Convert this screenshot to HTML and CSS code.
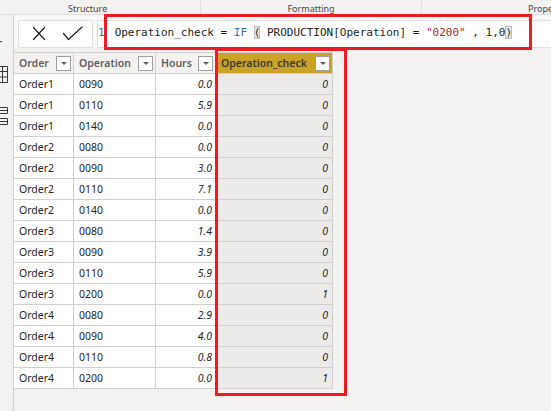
FILE: index.html
```html
<!DOCTYPE html>
<html>
<head>
<meta charset="utf-8">
<link rel="stylesheet" href="styles.css">
</head>
<body>
<div class="app">
  <div class="ribbon">
    <div class="rsec rsec-structure">Structure</div>
    <div class="rsec rsec-format">Formatting</div>
    <div class="rsec rsec-props">Properties</div>
  </div>
  <div class="main">
    <div class="sidebar">
      <svg class="navicons" width="13" height="120" viewBox="0 0 13 120">
        <rect x="0" y="26" width="2" height="1.2" fill="#605e5c"/>
        <g fill="none" stroke="#3b3a39" stroke-width="1">
          <path d="M0 51.5H7.5V67.5H0M0 56.5H7.5M0 62H7.5M2.5 51.5V67.5"/>
          <path d="M0 92.5H7.5V98.5H0M0 95.5H7.5"/>
          <path d="M0 103.5H7.5V109.5H0M0 106.5H7.5"/>
        </g>
      </svg>
    </div>
    <div class="content">
      <div class="fbar">
        <div class="xbox">
          <svg width="73" height="26" viewBox="0 0 73 26">
            <g fill="none" stroke="#201f1e" stroke-width="1.2" stroke-linecap="round" stroke-linejoin="round">
              <path d="M14.5 6.5L25.5 18.5M25.5 6.5L14.5 18.5"/>
              <path d="M44.5 12.5L49.5 18.5L63 6"/>
            </g>
          </svg>
        </div>
        <div class="finput">
          <span class="ln">1</span><span class="code">Operation_check = <span class="kw">IF</span> <span class="bm">(</span> PRODUCTION[Operation] = <span class="str">"0200"</span> , 1,0<span class="bm">)</span></span>
        </div>
      </div>
      <div class="grid">
        <div class="c h"><span>Order</span><span class="dd"></span></div>
        <div class="c h"><span>Operation</span><span class="dd"></span></div>
        <div class="c h"><span>Hours</span><span class="dd"></span></div>
        <div class="c h sel"><span>Operation_check</span><span class="dd"></span></div>

        <div class="c">Order1</div><div class="c">0090</div><div class="c num">0.0</div><div class="c num chk">0</div>
        <div class="c">Order1</div><div class="c">0110</div><div class="c num">5.9</div><div class="c num chk">0</div>
        <div class="c">Order1</div><div class="c">0140</div><div class="c num">0.0</div><div class="c num chk">0</div>
        <div class="c">Order2</div><div class="c">0080</div><div class="c num">0.0</div><div class="c num chk">0</div>
        <div class="c">Order2</div><div class="c">0090</div><div class="c num">3.0</div><div class="c num chk">0</div>
        <div class="c">Order2</div><div class="c">0110</div><div class="c num">7.1</div><div class="c num chk">0</div>
        <div class="c">Order2</div><div class="c">0140</div><div class="c num">0.0</div><div class="c num chk">0</div>
        <div class="c">Order3</div><div class="c">0080</div><div class="c num">1.4</div><div class="c num chk">0</div>
        <div class="c">Order3</div><div class="c">0090</div><div class="c num">3.9</div><div class="c num chk">0</div>
        <div class="c">Order3</div><div class="c">0110</div><div class="c num">5.9</div><div class="c num chk">0</div>
        <div class="c">Order3</div><div class="c">0200</div><div class="c num">0.0</div><div class="c num chk">1</div>
        <div class="c">Order4</div><div class="c">0080</div><div class="c num">2.9</div><div class="c num chk">0</div>
        <div class="c">Order4</div><div class="c">0090</div><div class="c num">4.0</div><div class="c num chk">0</div>
        <div class="c">Order4</div><div class="c">0110</div><div class="c num">0.8</div><div class="c num chk">0</div>
        <div class="c">Order4</div><div class="c">0200</div><div class="c num">0.0</div><div class="c num chk">1</div>
      </div>
    </div>
  </div>
  <div class="hl hl-formula"></div>
  <div class="hl hl-column"></div>
</div>
</body>
</html>
```

FILE: styles.css
```css
html, body {
  margin: 0;
  padding: 0;
}
body {
  background: #f3f2f1;
  font-family: "Noto Sans", "Open Sans", sans-serif;
  width: 551px;
  height: 411px;
  overflow: hidden;
}
.app {
  position: relative;
  width: 551px;
  height: 411px;
  overflow: hidden;
}

/* ribbon group labels */
.ribbon {
  display: flex;
  height: 15px;
  box-sizing: border-box;
  border-bottom: 1px solid #e1dfdd;
  background: #f3f2f1;
  font-size: 9px;
  color: #484644;
  white-space: nowrap;
  overflow: hidden;
}
.rsec {
  flex: none;
  height: 14px;
  box-sizing: border-box;
  padding-top: 3px;
  line-height: 12px;
  overflow: hidden;
}
.rsec-structure {
  width: 201px;
  border-right: 1px solid #e1dfdd;
  padding-left: 68px;
}
.rsec-format {
  width: 221px;
  border-right: 1px solid #e1dfdd;
  text-align: center;
}
.rsec-props {
  padding-left: 106px;
}

.main {
  display: flex;
  height: 396px;
}
.sidebar {
  flex: none;
  width: 14px;
  box-sizing: border-box;
  border-right: 1px solid #d2d0ce;
  background: #f3f2f1;
  overflow: hidden;
}
.navicons {
  display: block;
}
.content {
  flex: 1;
  min-width: 0;
  display: flex;
  flex-direction: column;
}

/* formula bar */
.fbar {
  display: flex;
  gap: 4px;
  height: 33px;
  box-sizing: border-box;
  padding: 5px 0 0 4px;
  background: #faf9f8;
}
.xbox {
  flex: none;
  width: 75px;
  height: 28px;
  box-sizing: border-box;
  border: 1px solid #e1dfdd;
  border-radius: 2px;
  background: #fff;
}
.xbox svg {
  display: block;
}
.finput {
  flex: 1;
  height: 28px;
  box-sizing: border-box;
  border: 1px solid #e1dfdd;
  border-right: none;
  background: #fff;
  display: flex;
  align-items: center;
  padding-bottom: 3px;
  font-family: "DejaVu Sans Mono", "Liberation Mono", monospace;
  font-size: 11px;
  color: #201f1e;
  white-space: pre;
  overflow: hidden;
}
.ln {
  color: #2b6fc4;
  margin-right: 10px;
}
.kw {
  color: #1f6fd1;
}
.str {
  color: #b02828;
}
.bm {
  background: #e7efe4;
  outline: 1px solid #b9bab7;
  outline-offset: -1px;
}

/* data grid */
.grid {
  display: grid;
  grid-template-columns: 60px 82px 60px 117px;
  width: max-content;
  margin-top: 4px;
  border-top: 1px solid #d2d0ce;
  font-size: 10.5px;
}
.c {
  height: 21px;
  box-sizing: border-box;
  border-right: 1px solid #d2d0ce;
  border-bottom: 1px solid #d2d0ce;
  background: #fff;
  color: #252423;
  padding: 0 3px 0 5px;
  line-height: 20px;
  white-space: nowrap;
  overflow: hidden;
}
.h {
  background: #f3f2f1;
  color: #605e5c;
  font-weight: 600;
  display: flex;
  align-items: center;
  justify-content: space-between;
  padding: 0 2px 0 5px;
}
.h.sel {
  background: #c9a227;
  color: #3b3a39;
}
.dd {
  width: 15px;
  height: 15px;
  box-sizing: border-box;
  border: 1px solid #a19f9d;
  background: #fff;
  display: flex;
  align-items: center;
  justify-content: center;
}
.dd::after {
  content: "";
  border-left: 3.5px solid transparent;
  border-right: 3.5px solid transparent;
  border-top: 3.5px solid #605e5c;
}
.num {
  text-align: right;
  font-style: italic;
}
.chk {
  background: #edebe9;
  padding-right: 4px;
}

/* red annotation boxes */
.hl {
  position: absolute;
  box-sizing: border-box;
  border: 3px solid #ed1c24;
  pointer-events: none;
}
.hl-formula {
  left: 104px;
  top: 14px;
  width: 428px;
  height: 36px;
}
.hl-column {
  left: 215px;
  top: 48px;
  width: 132px;
  height: 348px;
}
```
